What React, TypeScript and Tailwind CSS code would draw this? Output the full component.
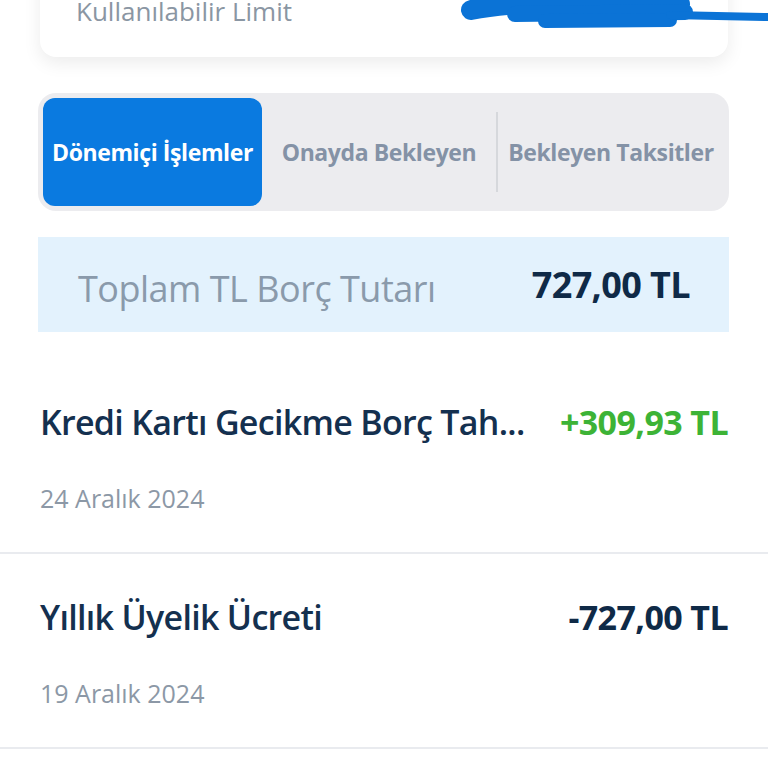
import React from 'react'

const font = { fontFamily: '"Open Sans", "Noto Sans", sans-serif' }

interface TxProps {
  title: string
  amount: string
  date: string
  positive?: boolean
}

function TransactionRow({ title, amount, date, positive }: TxProps) {
  return (
    <div className="h-[195px] border-b-2 border-[#e9ebef] px-[40px] pt-[43px]">
      <div className="flex items-center justify-between h-[40px]">
        <span className="text-[34px] font-semibold text-[#14304f] tracking-[-0.7px]">{title}</span>
        <span
          className={`text-[34px] font-bold tracking-[-0.6px] ${positive ? 'text-[#3db336]' : 'text-[#0f2a47]'}`}
        >
          {amount}
        </span>
      </div>
      <div className="mt-[42px] h-[30px] flex items-center text-[25px] text-[#8c98a6]">{date}</div>
    </div>
  )
}

export default function App() {
  return (
    <div className="relative w-full h-[768px] overflow-hidden bg-white" style={font}>
      {/* Limit card */}
      <div className="mx-[40px] -mt-[40px] h-[97px] rounded-[16px] bg-white shadow-[0_6px_18px_rgba(0,0,0,0.08)] flex items-end px-[36px] pb-[33px]">
        <span className="text-[26px] text-[#8a96a3] leading-none">Kullanılabilir Limit</span>
      </div>

      {/* redaction scribble */}
      <svg className="absolute left-[455px] top-0" width="313" height="34" viewBox="0 0 313 34">
        <path d="M16 10 C70 0 170 -2 225 4" stroke="#0b73d6" strokeWidth="20" strokeLinecap="round" fill="none" />
        <path d="M60 14 L230 12" stroke="#0b73d6" strokeWidth="16" strokeLinecap="round" fill="none" />
        <path d="M90 21 L215 20" stroke="#0b73d6" strokeWidth="14" strokeLinecap="round" fill="none" />
        <path d="M215 15 L313 17" stroke="#0b73d6" strokeWidth="8" strokeLinecap="round" fill="none" />
      </svg>

      {/* Tabs */}
      <div className="mx-[38px] mr-[39px] mt-[36px] h-[118px] rounded-[18px] bg-[#ececef] p-[5px] flex items-stretch">
        <div className="w-[219px] rounded-[12px] bg-[#0a7ae0] flex items-center justify-center">
          <span className="text-[23px] font-bold text-white tracking-[-0.4px]">Dönemiçi İşlemler</span>
        </div>
        <div className="flex-1 flex items-center justify-center">
          <span className="text-[23px] font-bold text-[#8492a6] tracking-[-0.4px]">Onayda Bekleyen</span>
        </div>
        <div className="w-[2px] my-[14px] bg-[#d6d8dc]" />
        <div className="w-[226px] flex items-center justify-center">
          <span className="text-[23px] font-bold text-[#8492a6] tracking-[-0.4px]">Bekleyen Taksitler</span>
        </div>
      </div>

      {/* Total */}
      <div className="mx-[38px] mr-[39px] mt-[26px] h-[95px] bg-[#e3f2fd] flex items-center justify-between pl-[40px] pr-[39px]">
        <span className="text-[36px] font-normal text-[#8a9aab] tracking-[-0.5px] mt-[8px]">Toplam TL Borç Tutarı</span>
        <span className="text-[36px] font-bold text-[#0f2a47] tracking-[-0.6px]">727,00 TL</span>
      </div>

      <div className="mt-[27px]">
        <TransactionRow title="Kredi Kartı Gecikme Borç Tah..." amount="+309,93 TL" date="24 Aralık 2024" positive />
        <TransactionRow title="Yıllık Üyelik Ücreti" amount="-727,00 TL" date="19 Aralık 2024" />
      </div>
    </div>
  )
}
